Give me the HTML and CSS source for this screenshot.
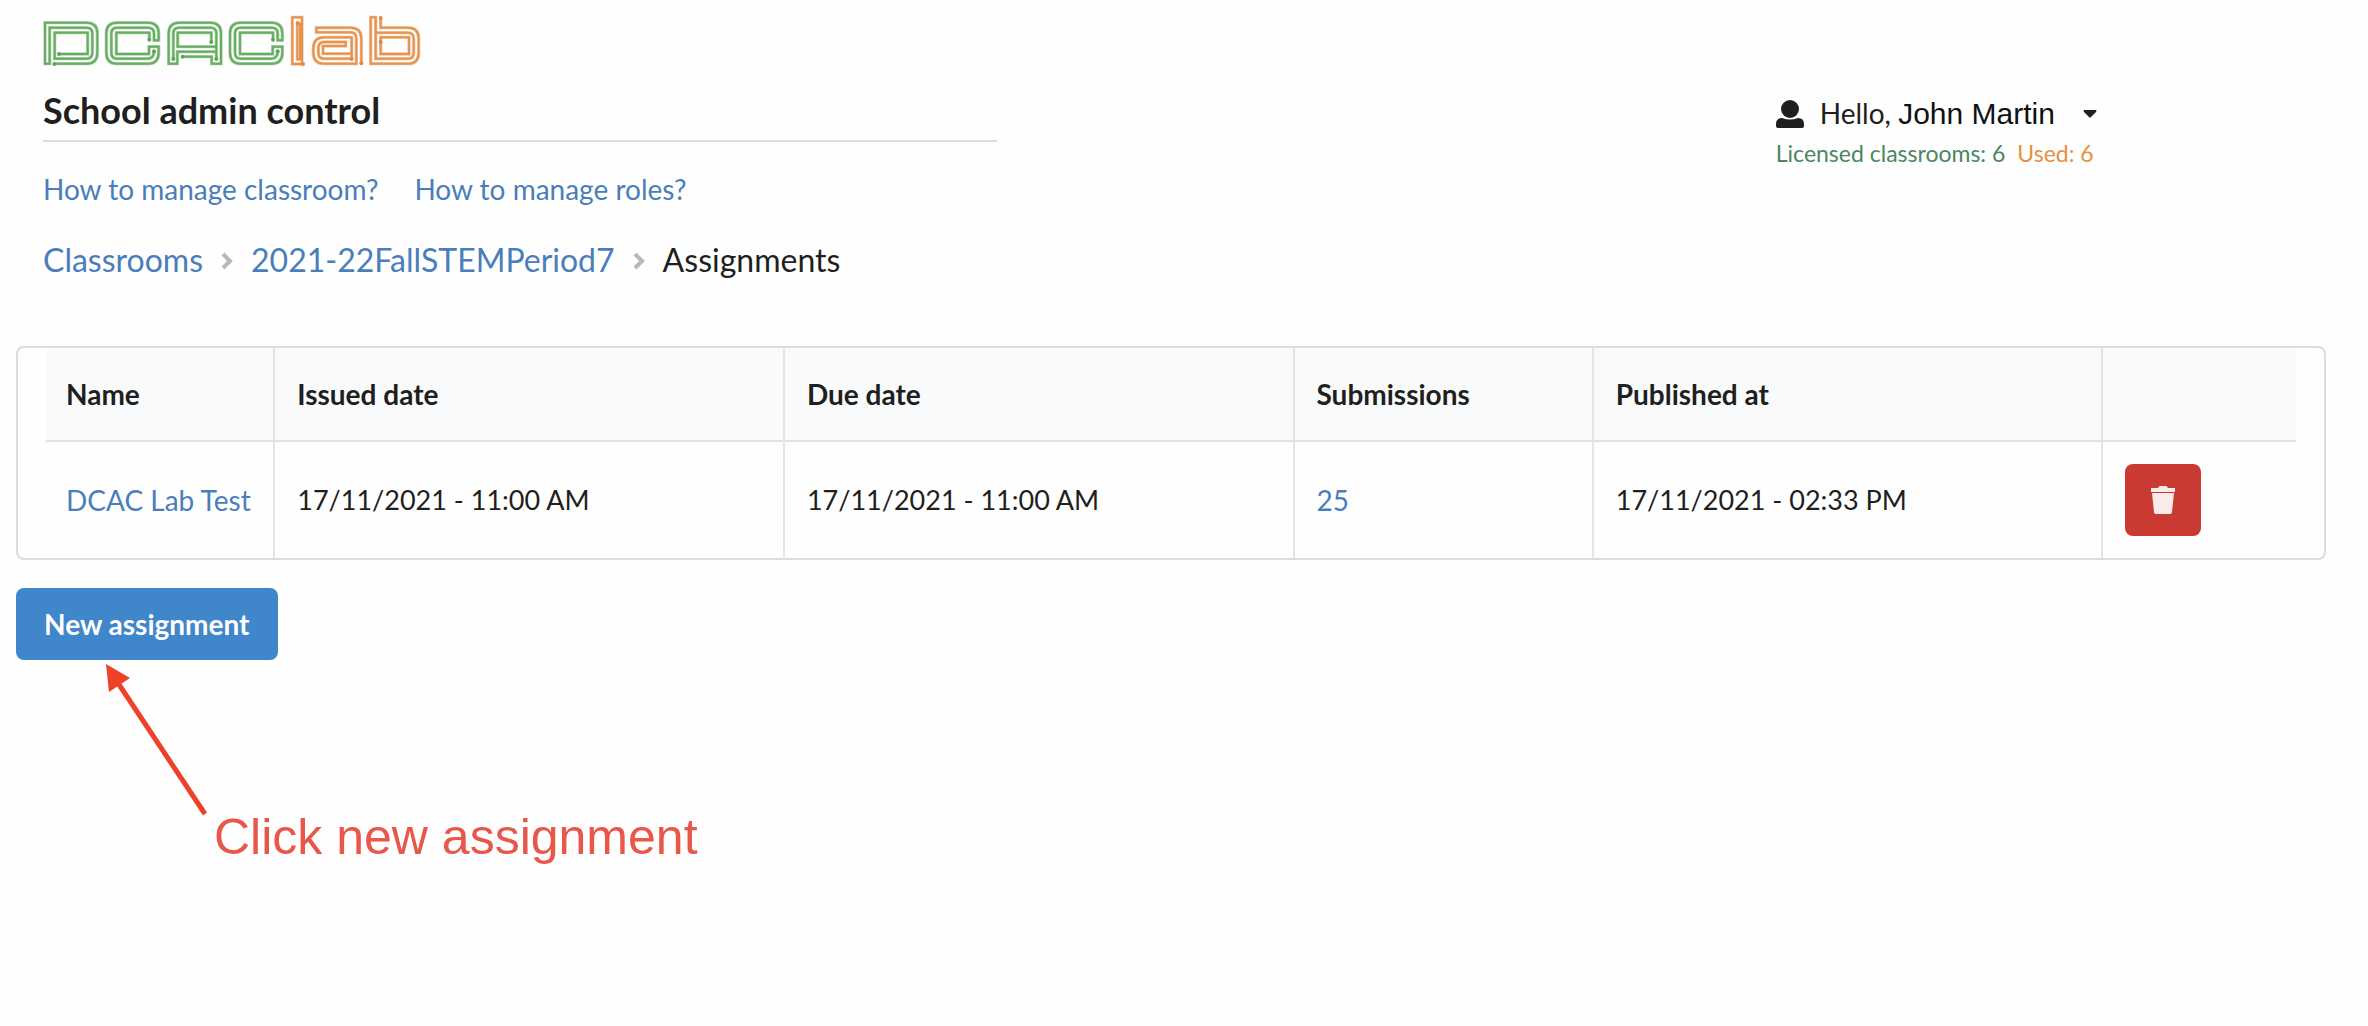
FILE: index.html
```html
<!DOCTYPE html>
<html lang="en">
<head>
  <meta charset="UTF-8" />
  <meta name="viewport" content="width=device-width, initial-scale=1.0"/>
  <title>School admin control</title>
  <link rel="stylesheet" href="styles.css">
</head>
<body>

<header class="page-header">
  <a href="#" class="logo" aria-label="DCAClab">
    <svg viewBox="40 36 1146 168" width="382" height="56">
      <defs>
        <g id="trace-green">
          <path d="M75 191H170Q203 191 203 158V100Q203 68 170 68H46V191H60V83H170Q188 83 188 100V158Q188 176 170 176H75V98H174V162H88"/>
          <path id="trace-c" d="M359 119V98H260V162H358V140H387V158Q387 191 354 191H263Q230 191 230 158V100Q230 68 263 68H354Q387 68 387 100V121H373V100Q373 83 354 83H263Q245 83 245 100V158Q245 176 263 176H354Q373 176 373 153"/>
          <path d="M431 177V100Q431 83 448 83H542Q560 83 560 100V177M545 126V98H444V140H560M560 155H443V191H417V100Q417 68 450 68H541Q574 68 574 100V191H546V170H459"/>
          <use href="#trace-c" x="371"/>
        </g>
        <g id="trace-orange">
          <path d="M803 68V178H811V68M820 192H788V52H817V192"/>
          <path d="M995 190V116Q995 83 962 83H860V97H962Q980 97 980 116V191H884Q851 191 851 158V145Q851 112 884 112H966V176H884Q866 176 866 158V145Q866 126 884 126H948V138H880V161H966"/>
          <path d="M1053 52V83H1135Q1167 83 1167 116V158Q1167 191 1135 191H1023V52H1038V176H1135Q1152 176 1152 158V116Q1152 98 1135 98H1038M1053 126V162H1138V112H1053V162"/>
        </g>
      </defs>
      <g class="trace green">
        <use href="#trace-green" class="glow"/>
        <use href="#trace-green" class="core"/>
      </g>
      <g class="trace orange">
        <use href="#trace-orange" class="glow"/>
        <use href="#trace-orange" class="core"/>
      </g>
      <g class="green-dots">
        <circle cx="74" cy="192" r="6"/><circle cx="88" cy="162" r="6"/>
        <circle cx="359" cy="119" r="6"/><circle cx="373" cy="154" r="6"/>
        <circle cx="431" cy="177" r="6"/><circle cx="545" cy="126" r="6"/>
        <circle cx="560" cy="177" r="6"/><circle cx="459" cy="170" r="6"/>
        <circle cx="730" cy="119" r="6"/><circle cx="744" cy="154" r="6"/>
      </g>
      <g class="orange-dots">
        <circle cx="804" cy="69" r="6"/><circle cx="820" cy="192" r="6"/>
        <circle cx="966" cy="177" r="6"/><circle cx="995" cy="190" r="6"/>
        <circle cx="1053" cy="54" r="6"/><circle cx="1053" cy="126" r="6"/>
      </g>
    </svg>
  </a>

  <div class="header-grid">
    <div>
      <h1>School admin control</h1>
      <nav class="help-links">
        <a href="#">How to manage classroom?</a>
        <a href="#">How to manage roles?</a>
      </nav>
    </div>
    <div class="user-info">
      <button type="button" class="user-menu">
        <svg class="user-icon" viewBox="0 0 28 28" width="28" height="28" fill="currentColor">
          <circle cx="14" cy="9" r="9"/>
          <path d="M0 24Q0 18 6 18Q14 21 22 18Q28 18 28 24V26Q28 28 26 28H2Q0 28 0 26Z"/>
        </svg>
        <span>Hello, <span class="user-name">John Martin</span></span>
        <svg class="caret" viewBox="0 0 14 8" width="14" height="8" fill="currentColor">
          <path d="M1 0H13Q14 0 13 2L8 7Q7 8 6 7L1 2Q0 0 1 0Z"/>
        </svg>
      </button>
      <div class="license">
        <span class="licensed">Licensed classrooms: 6</span>
        <span class="used">Used: 6</span>
      </div>
    </div>
  </div>

  <nav class="breadcrumb">
    <a href="#">Classrooms</a>
    <svg class="divider" viewBox="0 0 12 18" width="12" height="18"><path d="M2 2L9 9L2 16"/></svg>
    <a href="#">2021-22FallSTEMPeriod7</a>
    <svg class="divider" viewBox="0 0 12 18" width="12" height="18"><path d="M2 2L9 9L2 16"/></svg>
    <span>Assignments</span>
  </nav>
</header>

<main>
  <div class="table-box">
    <table>
      <thead>
        <tr>
          <th class="col-name">Name</th>
          <th class="col-date">Issued date</th>
          <th class="col-date">Due date</th>
          <th class="col-count">Submissions</th>
          <th class="col-date">Published at</th>
          <th></th>
        </tr>
      </thead>
      <tbody>
        <tr>
          <td><a href="#">DCAC Lab Test</a></td>
          <td>17/11/2021 - 11:00 AM</td>
          <td>17/11/2021 - 11:00 AM</td>
          <td><a href="#">25</a></td>
          <td>17/11/2021 - 02:33 PM</td>
          <td>
            <button type="button" class="delete-button" aria-label="Delete">
              <svg viewBox="0 0 26 30" width="26" height="30" fill="currentColor">
                <path d="M1 3H8Q9 1 10 1H16Q17 1 18 3H25V7H1ZM2 8H24L22 27Q22 29 20 29H6Q4 29 4 27Z"/>
              </svg>
            </button>
          </td>
        </tr>
      </tbody>
    </table>
  </div>

  <button type="button" class="new-button">New assignment</button>

  <!-- Hint under the button -->
  <div class="hint">
    <svg viewBox="0 0 104 154" width="104" height="154">
      <path d="M12 18L101 152" fill="none" stroke="#ee4128" stroke-width="5"/>
      <path d="M2 2L26 16L5 30Z" fill="#ee4128"/>
    </svg>
    <p>Click new assignment</p>
  </div>
</main>

</body>
</html>
```
FILE: styles.css
```css
* {
  box-sizing: border-box;
}

body {
  font-family: Lato, "Liberation Sans", sans-serif;
  font-size: 28px;
  line-height: 36px;
  color: #1f1f20;
  background: #fefefe;
  margin: 0;
  padding: 12px 42px 40px 16px;
}

a {
  color: #4a7ebb;
  text-decoration: none;
}

button {
  font-family: inherit;
  font-size: 28px;
  border: none;
  cursor: pointer;
}

.page-header {
  padding-left: 27px;
}

.logo {
  display: block;
}

.logo svg {
  display: block;
}

.trace {
  fill: none;
}

.glow {
  stroke-width: 10;
  opacity: 0.5;
}

.core {
  stroke-width: 6;
}

.green {
  stroke: #67ad62;
}

.orange {
  stroke: #e6934f;
}

.green-dots {
  fill: #5fa35c;
}

.orange-dots {
  fill: #e08a45;
}

.header-grid {
  display: grid;
  grid-template-columns: 41.8% 34.1% 1fr;
  margin-top: 20px;
}

h1 {
  font-size: 36px;
  line-height: 44px;
  margin: 0;
  padding-bottom: 8px;
  border-bottom: 2px solid #dcdcdd;
}

.help-links {
  display: flex;
  gap: 36px;
  margin-top: 29px;
}

.user-info {
  grid-column: 3;
  padding-top: 7px;
}

.user-menu {
  display: flex;
  align-items: center;
  padding: 0;
  line-height: 36px;
  color: #1f1f20;
  background: none;
  white-space: nowrap;
}

.user-icon {
  margin-right: 16px;
}

.user-name {
  font-family: "Liberation Sans", Arial, sans-serif;
  font-size: 30px;
  color: #111;
}

.caret {
  margin-left: 28px;
}

.license {
  display: flex;
  gap: 12px;
  margin-top: 6px;
  font-size: 23px;
  line-height: 30px;
  white-space: nowrap;
}

.licensed {
  color: #4c8660;
}

.used {
  color: #e6913c;
}

.breadcrumb {
  display: flex;
  align-items: center;
  margin-top: 33px;
  font-size: 32px;
  line-height: 40px;
}

.divider {
  margin: 2px 18px 0;
  fill: none;
  stroke: #b8b8b9;
  stroke-width: 4;
}

.table-box {
  margin-top: 66px;
  padding: 0 28px;
  border: 2px solid #dcdcdd;
  border-radius: 8px;
}

table {
  width: 100%;
  table-layout: fixed;
  border-collapse: separate;
  border-spacing: 0;
}

th,
td {
  padding: 22px;
  text-align: left;
  white-space: nowrap;
}

th {
  height: 94px;
  background: #f8fafc;
  border-bottom: 2px solid #e1e2e3;
}

td {
  font-size: 27px;
}

td a {
  font-size: 28px;
}

th + th,
td + td {
  border-left: 2px solid #e4e5e6;
}

td:first-child,
th:first-child {
  padding-left: 20px;
  padding-right: 0;
}

.col-name {
  width: 10.1%;
}

.col-date {
  width: 22.65%;
}

.col-count {
  width: 13.3%;
}

.delete-button {
  display: flex;
  justify-content: center;
  align-items: center;
  width: 76px;
  height: 72px;
  color: #f8ebe9;
  background: #c93a32;
  border-radius: 8px;
}

.new-button {
  display: block;
  height: 72px;
  margin-top: 28px;
  padding: 0 28px;
  font-weight: bold;
  color: white;
  background: #4086cb;
  border-radius: 8px;
}

.hint {
  display: flex;
  align-items: flex-start;
  gap: 6px;
  margin: 2px 0 0 88px;
}

.hint p {
  margin: 145px 0 0;
  font-family: "Liberation Sans", Arial, sans-serif;
  font-size: 50px;
  line-height: 60px;
  color: #e8584a;
}
```
